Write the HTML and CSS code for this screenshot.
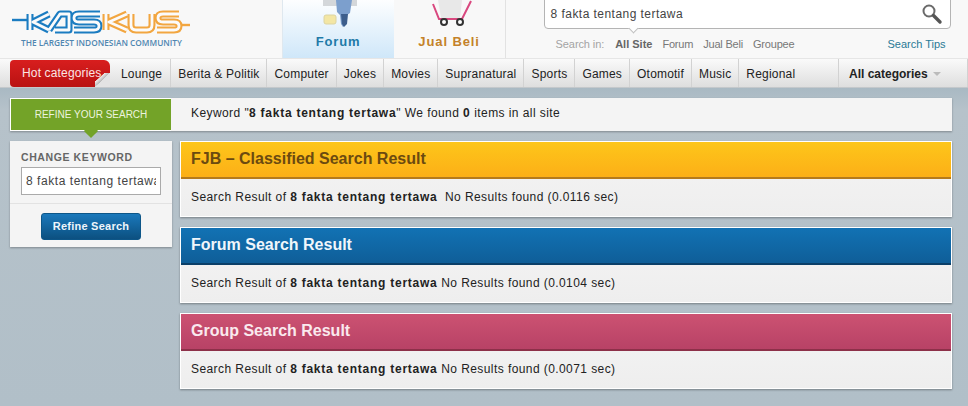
FILE: index.html
```html
<!DOCTYPE html>
<html lang="en">
<head>
<meta charset="utf-8">
<title>Kaskus Search</title>
<link rel="stylesheet" href="styles.css">
</head>
<body>
<header class="top">
  <a class="logo" aria-label="Kaskus">
    <svg class="logo-mark" width="182" height="28" viewBox="10 8 182 28">
      <path class="tail-blue" d="M12 20H28"/>
      <path class="tail-orange" d="M176 25H190"/>
      <g class="lo lo-blue">
        <path d="M30 14V30M49 14L33 22L49 30"/>
        <path d="M49 30L60 14H69V30H55"/>
        <path d="M100 14H79Q74 14 74 18T79 22H94Q99 22 99 26T94 30H74"/>
      </g>
      <g class="lo lo-orange">
        <path d="M106 14V30M127 14L109 22L127 30"/>
        <path d="M131 14V25Q131 30 136 30H147Q152 30 152 25V14"/>
        <path d="M179 14H163Q158 14 158 18T163 22H174Q179 22 179 26T174 30H157"/>
      </g>
      <g class="li">
        <path d="M30 14V30M49 14L33 22L49 30"/>
        <path d="M49 30L60 14H69V30H55"/>
        <path d="M100 14H79Q74 14 74 18T79 22H94Q99 22 99 26T94 30H74"/>
        <path d="M106 14V30M127 14L109 22L127 30"/>
        <path d="M131 14V25Q131 30 136 30H147Q152 30 152 25V14"/>
        <path d="M179 14H163Q158 14 158 18T163 22H174Q179 22 179 26T174 30H157"/>
      </g>
    </svg>
    <span class="tagline">THE LARGEST INDONESIAN COMMUNITY</span>
  </a>
  <nav class="tabs">
    <a class="tab tab-forum">
      <svg class="tab-icon" width="40" height="27" viewBox="0 0 40 27">
        <rect x="5" y="0" width="34" height="6" fill="#d4d7da"/>
        <path d="M18 0h16l-2 13-3 2-1 9-3 3-2-3-1-9-3-3z" fill="#7c9fcd"/>
        <path d="M23 14h7l-1 10-3 3-2-3z" fill="#3d5e8c"/>
        <rect x="6" y="15" width="12" height="9" rx="2" fill="#f3e6a4" stroke="#dcd4a2"/>
      </svg>
      <span class="tab-label label-forum">Forum</span>
    </a>
    <a class="tab tab-jual">
      <svg class="tab-icon" width="48" height="27" viewBox="0 0 48 27">
        <path d="M13 0h24l-2 18H16z" fill="#e8e8e8"/>
        <path d="M8 4l6 15h23L46 1" fill="none" stroke="#d9487f" stroke-width="2"/>
        <circle cx="19" cy="22" r="3" fill="#fff" stroke="#333" stroke-width="2"/>
        <circle cx="35" cy="22" r="3" fill="#fff" stroke="#333" stroke-width="2"/>
      </svg>
      <span class="tab-label label-jual">Jual Beli</span>
    </a>
  </nav>
  <div class="search">
    <div class="search-box">
      <span class="search-text">8 fakta tentang tertawa</span>
      <svg width="22" height="22" viewBox="0 0 22 22">
        <circle cx="8" cy="8" r="5.5" fill="#fff" stroke="#6a6a6a" stroke-width="2"/>
        <path d="M12.5 12.5L19 19" stroke="#555" stroke-width="3.4" stroke-linecap="round"/>
      </svg>
    </div>
    <div class="search-opts">
      <span class="opt-label">Search in:</span>
      <b class="opt-active">All Site</b>
      <span class="opt">Forum</span>
      <span class="opt">Jual Beli</span>
      <span class="opt">Groupee</span>
      <a class="tips">Search Tips</a>
    </div>
  </div>
</header>

<nav class="cats">
  <a class="hot">Hot categories</a>
  <a class="cat first">Lounge</a>
  <a class="cat">Berita &amp; Politik</a>
  <a class="cat">Computer</a>
  <a class="cat">Jokes</a>
  <a class="cat">Movies</a>
  <a class="cat">Supranatural</a>
  <a class="cat">Sports</a>
  <a class="cat">Games</a>
  <a class="cat">Otomotif</a>
  <a class="cat">Music</a>
  <a class="cat">Regional</a>
  <a class="all">All categories <i class="caret"></i></a>
</nav>

<main class="page">
  <div class="bar">
    <div class="refine-tag">REFINE YOUR SEARCH</div>
    <p class="summary">Keyword "<b>8 fakta tentang tertawa</b>" We found <b>0</b> items in all site</p>
  </div>
  <div class="columns">
    <aside class="side">
      <div class="side-top">
        <label class="side-title" for="kw">CHANGE KEYWORD</label>
        <input class="side-input" id="kw" value="8 fakta tentang tertawa" readonly>
      </div>
      <div class="side-bottom"><a class="btn">Refine Search</a></div>
    </aside>
    <section class="results">
      <article class="result">
        <h2 class="rh rh-fjb">FJB – Classified Search Result</h2>
        <p class="rb">Search Result of <b>8 fakta tentang tertawa</b>&nbsp; No Results found (0.0116 sec)</p>
      </article>
      <article class="result">
        <h2 class="rh rh-forum">Forum Search Result</h2>
        <p class="rb">Search Result of <b>8 fakta tentang tertawa</b> No Results found (0.0104 sec)</p>
      </article>
      <article class="result">
        <h2 class="rh rh-group">Group Search Result</h2>
        <p class="rb">Search Result of <b>8 fakta tentang tertawa</b> No Results found (0.0071 sec)</p>
      </article>
    </section>
  </div>
</main>
</body>
</html>
```
FILE: styles.css
```css
* { box-sizing: border-box; }
html, body { height: 100%; }
body {
  margin: 0;
  overflow: hidden;
  background: linear-gradient(#a9b9c3 88px, #b6c2ca 110px, #b1bfc8);
  font-family: "Liberation Sans", Arial, sans-serif;
  font-size: 12px;
  color: #222;
}
a { text-decoration: none; color: inherit; }
p, h2 { margin: 0; }

/* header */
.top { display: flex; height: 59px; background: #f8f8f8; border-bottom: 1px solid #e6e6e6; }
.logo { width: 282px; display: flex; flex-direction: column; padding: 8px 0 0 10px; }
.logo-mark { display: block; flex: none; }
.lo path, .li path { fill: none; stroke-linejoin: round; }
.lo path { stroke-width: 7; }
.lo-blue path { stroke: #1b7cc1; }
.lo-orange path { stroke: #f2a640; }
.li path { stroke: #fbfbfb; stroke-width: 2.8; }
.tail-blue { stroke: #1b7cc1; stroke-width: 2.4; }
.tail-orange { stroke: #f2a640; stroke-width: 2.4; }
.tagline { margin: 1px 0 0 11px; font-family: "Open Sans", sans-serif; font-size: 8.3px; line-height: 11px; font-weight: 600; color: #4f86b0; white-space: nowrap; }

.tabs { display: flex; }
.tab { height: 58px; display: flex; flex-direction: column; align-items: center; }
.tab-icon { display: block; flex: none; }
.tab-forum { width: 112px; background: linear-gradient(#fdfeff, #cfe7f9); border-left: 1px solid #dfe8ef; }
.tab-jual { width: 112px; border-right: 1px solid #e2e2e2; }
.tab-label { margin-top: 7px; font-size: 13px; font-weight: 700; letter-spacing: .9px; }
.label-forum { color: #1f7aa8; }
.label-jual { color: #c4822a; }

.search { width: 463px; padding-left: 38px; }
.search-box {
  position: relative;
  width: 407px; height: 30px; margin-top: -1px;
  display: flex; align-items: center; justify-content: space-between;
  padding: 0 7px 0 6px;
  background: #fff; border: 1px solid #b4b4b4; border-radius: 0 0 4px 4px;
}
.search-box::after {
  content: ""; position: absolute; left: 85px; bottom: -4px;
  width: 6px; height: 6px; background: #fff; transform: rotate(45deg);
  border-right: 1px solid #c0c0c0; border-bottom: 1px solid #c0c0c0;
}
.search-text { font-size: 12px; letter-spacing: .45px; color: #444; }
.search-opts { display: flex; align-items: center; margin-top: 9px; font-size: 11px; color: #777; padding-left: 12px; width: 402px; }
.opt-label { color: #a4a4a4; margin-right: 11px; letter-spacing: -.1px; }
.opt-active { color: #666; margin-right: 10px; }
.opt { margin-right: 10px; letter-spacing: -.2px; }
.tips { margin-left: auto; color: #2a7a96; }

/* category nav */
.cats {
  display: flex; align-items: stretch; height: 29px;
  padding-left: 10px;
  background: linear-gradient(#fafafa, #dedede);
  border-bottom: 1px solid #c4c8cb;
  font-size: 12px; letter-spacing: .2px;
}
.hot {
  position: relative;
  width: 100px; margin-top: 1px; padding-left: 12px; line-height: 26px;
  color: #fbe4e4; background: linear-gradient(#d81e1e, #b91212);
  border-radius: 4px 6px 4px 4px;
  white-space: nowrap; letter-spacing: .15px;
}
.hot::after {
  content: ""; position: absolute; right: 0; bottom: 0; width: 15px; height: 14px;
  background: linear-gradient(to bottom right, transparent 30%, #efe9e9 32%, #b9b9b9 49%, #e3e3e3 50%);
}
.cat { display: flex; align-items: center; padding: 1px 7px 0; border-right: 1px solid #d2d2d2; white-space: nowrap; }
.cat.first { padding-left: 11px; padding-right: 8px; }
.cat:nth-last-of-type(2) { border-right: 0; }
.all { margin-left: auto; width: 130px; display: flex; align-items: center; gap: 5px; padding: 1px 0 0 10px; font-weight: 700; letter-spacing: 0; border-left: 1px solid #d2d2d2; border-right: 1px solid #d2d2d2; white-space: nowrap; }
.caret { width: 0; height: 0; border: 4px solid transparent; border-top-color: #bbb; margin-top: 4px; }

/* page */
.page { padding: 10px 16px 0 10px; }
.bar { display: flex; height: 33px; background: #f4f4f4; box-shadow: 0 1px 2px rgba(0,0,0,.3); }
.refine-tag {
  position: relative;
  width: 161px; display: flex; align-items: center; justify-content: center;
  background: #73a328; color: #edf3df; font-size: 10px;
  border: 1px solid #fff; border-right: 0;
}
.refine-tag::after {
  content: ""; position: absolute; left: 75px; bottom: -6px;
  width: 10px; height: 10px; background: #73a328; transform: rotate(45deg); z-index: 1;
}
.summary { padding-left: 20px; line-height: 31px; letter-spacing: .42px; color: #222; }
.summary b, .rb b { letter-spacing: .75px; }

.columns { display: flex; gap: 8px; margin-top: 10px; align-items: flex-start; }
.side { width: 162px; height: 106px; background: #f4f4f4; box-shadow: 0 1px 2px rgba(0,0,0,.3); }
.side-top { height: 63px; padding: 10px 11px 0; border-bottom: 1px solid #e2e2e2; }
.side-title { display: block; font-size: 10.5px; font-weight: 700; letter-spacing: .6px; color: #666; line-height: 12px; }
.side-input {
  display: block; width: 140px; margin-top: 4px; height: 28px; padding: 0 4px;
  font: 12px "Liberation Sans", Arial, sans-serif;
  background: #fff; border: 1px solid #aaa; letter-spacing: .55px; color: #444; outline: 0;
}
.side-bottom { display: flex; justify-content: center; padding-top: 9px; }
.btn {
  width: 100px; height: 27px; line-height: 24px; text-align: center;
  font-size: 11px; font-weight: 700; letter-spacing: .25px; color: #eef5fb;
  background: linear-gradient(#1a78bb, #0c5080); border-radius: 3px; border: 1px solid #0d5688;
}

.results { flex: 1; display: flex; flex-direction: column; gap: 10px; }
.result { height: 76px; background: linear-gradient(#f5f4f4, #eeeeee); border: 1px solid #fff; box-shadow: 0 1px 2px rgba(0,0,0,.35); }
.rh { height: 37px; padding-left: 10px; font-size: 16px; line-height: 33px; font-weight: 700; }
.rh-fjb { background: linear-gradient(#fdc61a, #fcaf17); border-bottom: 2px solid #b57a1c; color: #6b4a10; }
.rh-forum { background: linear-gradient(#1272b4, #0f5e98); border-bottom: 2px solid #0b3f68; color: #f0f6fb; }
.rh-group { background: linear-gradient(#cc5272, #b84266); border-bottom: 2px solid #8d3049; color: #fae9ee; }
.rb { padding-left: 10px; line-height: 36px; letter-spacing: .42px; color: #222; }
```
